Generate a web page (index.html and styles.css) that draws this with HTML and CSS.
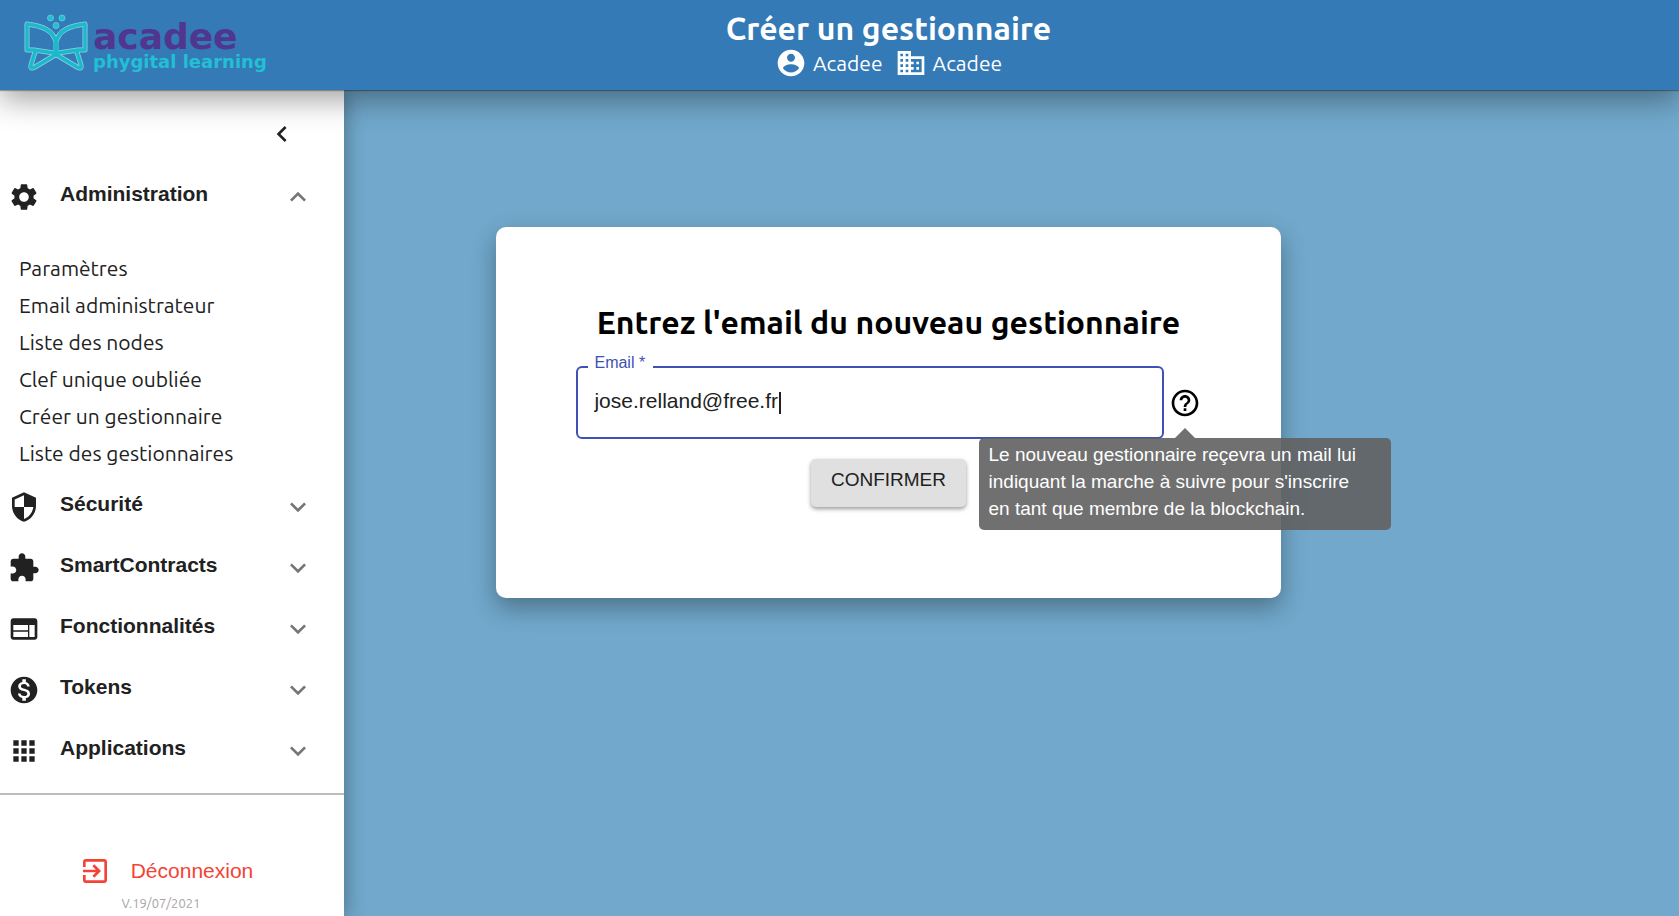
FILE: index.html
```html
<!DOCTYPE html>
<html lang="fr">
<head>
<meta charset="utf-8">
<meta name="viewport" content="width=device-width, initial-scale=1">
<title>Créer un gestionnaire</title>
<link rel="stylesheet" href="styles.css">
</head>
<body>
<header class="topbar">
  <a class="brand" href="#" aria-label="Acadee">
    <svg class="brand-mark" viewBox="22 11 68 62" aria-hidden="true">
      <g fill="none" stroke-linecap="round" stroke-linejoin="round">
        <g stroke="#8fd0df" stroke-width="5">
          <path d="M56 54V43C54 30 42 26 27 24V50H34L54 53M56 54V43C58 30 70 26 85 24V50H78L58 53M35 52L31 65Q30 70 35 67L56 54.500L77 67Q82 70 81 65L77 52"/>
        </g>
        <path stroke="#1cb9cc" stroke-width="3.500" d="M56 54V43C54 30 42 26 27 24V50H34L54 53M56 54V43C58 30 70 26 85 24V50H78L58 53M35 52L31 65Q30 70 35 67L56 54.500L77 67Q82 70 81 65L77 52"/>
        <path stroke="#1cb9cc" stroke-width="5" d="M56 42V54"/>
      </g>
      <g fill="#25bfd2" stroke="#5cc5d7" stroke-width="1"><circle cx="50.500" cy="18" r="3"/><circle cx="62" cy="18" r="3"/><circle cx="56" cy="25.500" r="3"/></g>
    </svg>
    <span class="brand-text"><span class="brand-name">acadee</span><span class="brand-tag">phygital learning</span></span>
  </a>
  <div class="heading">
    <h1 class="page-title">Créer un gestionnaire</h1>
    <div class="identity">
      <svg class="icon" viewBox="0 0 24 24" aria-hidden="true"><path d="M12 2C6.480 2 2 6.480 2 12s4.480 10 10 10 10-4.480 10-10S17.520 2 12 2zm0 3c1.660 0 3 1.340 3 3s-1.340 3-3 3-3-1.340-3-3 1.340-3 3-3zm0 14.200c-2.500 0-4.710-1.280-6-3.220.030-1.990 4-3.080 6-3.080 1.990 0 5.970 1.090 6 3.080-1.290 1.940-3.500 3.220-6 3.220z"/></svg>
      <span class="identity-name">Acadee</span>
      <svg class="icon" viewBox="0 0 24 24" aria-hidden="true"><path d="M12 7V3H2v18h20V7H12zM6 19H4v-2h2v2zm0-4H4v-2h2v2zm0-4H4V9h2v2zm0-4H4V5h2v2zm4 12H8v-2h2v2zm0-4H8v-2h2v2zm0-4H8V9h2v2zm0-4H8V5h2v2zm10 12h-8v-2h2v-2h-2v-2h2v-2h-2V9h8v10zm-2-8h-2v2h2v-2zm0 4h-2v2h2v-2z"/></svg>
      <span class="identity-name">Acadee</span>
    </div>
  </div>
</header>
<div class="layout">
  <nav class="sidebar">
    <button class="collapse" type="button" aria-label="Replier le menu"><svg class="icon" viewBox="0 0 24 24"><path d="M15.410 7.410L14 6l-6 6 6 6 1.410-1.410L10.830 12z"/></svg></button>
    <button class="section section-open" type="button" aria-expanded="true">
      <svg class="icon" viewBox="0 0 24 24"><path d="M19.140 12.940c.040-.3.060-.610.060-.940 0-.320-.020-.640-.070-.940l2.030-1.580c.180-.140.230-.410.120-.610l-1.920-3.320c-.120-.220-.370-.290-.590-.220l-2.390.960c-.5-.380-1.030-.7-1.620-.940l-.360-2.540c-.040-.240-.240-.410-.480-.410h-3.840c-.240 0-.430.170-.470.410l-.360 2.540c-.590.240-1.130.570-1.620.940l-2.390-.960c-.220-.080-.470 0-.590.220L2.740 8.870c-.120.210-.080.470.120.610l2.030 1.580c-.050.3-.090.630-.090.940s.020.640.070.940l-2.030 1.580c-.180.140-.230.410-.120.610l1.920 3.320c.120.220.370.290.590.220l2.390-.960c.5.380 1.030.7 1.620.940l.360 2.540c.050.240.240.410.480.410h3.840c.240 0 .440-.170.470-.410l.360-2.540c.590-.240 1.130-.560 1.620-.940l2.390.960c.220.080.470 0 .590-.220l1.920-3.320c.120-.220.070-.470-.120-.610l-2.010-1.580zM12 15.600c-1.980 0-3.600-1.620-3.600-3.600s1.620-3.600 3.600-3.600 3.600 1.620 3.600 3.600-1.620 3.600-3.600 3.600z"/></svg>
      <span class="section-name">Administration</span>
      <svg class="icon arrow" viewBox="0 0 24 24"><path d="M12 8l-6 6 1.410 1.410L12 10.830l4.590 4.580L18 14z"/></svg>
    </button>
    <ul class="links">
      <li><a href="#">Paramètres</a></li>
      <li><a href="#">Email administrateur</a></li>
      <li><a href="#">Liste des nodes</a></li>
      <li><a href="#">Clef unique oubliée</a></li>
      <li><a href="#">Créer un gestionnaire</a></li>
      <li><a href="#">Liste des gestionnaires</a></li>
    </ul>
    <button class="section" type="button" aria-expanded="false">
      <svg class="icon" viewBox="0 0 24 24"><path d="M12 1L3 5v6c0 5.550 3.840 10.740 9 12 5.160-1.260 9-6.450 9-12V5l-9-4zm0 10.990h7c-.530 4.120-3.280 7.790-7 8.940V12H5V6.300l7-3.110v8.800z"/></svg>
      <span class="section-name">Sécurité</span>
      <svg class="icon arrow" viewBox="0 0 24 24"><path d="M16.590 8.590L12 13.170 7.410 8.590 6 10l6 6 6-6z"/></svg>
    </button>
    <button class="section" type="button" aria-expanded="false">
      <svg class="icon" viewBox="0 0 24 24"><path d="M20.500 11H19V7c0-1.100-.9-2-2-2h-4V3.500C13 2.120 11.880 1 10.500 1S8 2.120 8 3.500V5H4c-1.100 0-1.990.9-1.990 2v3.800H3.500c1.490 0 2.700 1.210 2.700 2.700s-1.210 2.700-2.700 2.700H2V20c0 1.100.9 2 2 2h3.800v-1.500c0-1.490 1.210-2.700 2.700-2.700 1.490 0 2.700 1.210 2.700 2.700V22H17c1.100 0 2-.9 2-2v-4h1.500c1.380 0 2.500-1.120 2.500-2.500S21.880 11 20.500 11z"/></svg>
      <span class="section-name">SmartContracts</span>
      <svg class="icon arrow" viewBox="0 0 24 24"><path d="M16.590 8.590L12 13.170 7.410 8.590 6 10l6 6 6-6z"/></svg>
    </button>
    <button class="section" type="button" aria-expanded="false">
      <svg class="icon" viewBox="0 0 24 24"><path d="M20 4H4c-1.100 0-1.990.9-1.990 2L2 18c0 1.100.9 2 2 2h16c1.100 0 2-.9 2-2V6c0-1.100-.9-2-2-2zm-5 14H4v-4h11v4zm0-5H4V9h11v4zm5 5h-4V9h4v9z"/></svg>
      <span class="section-name">Fonctionnalités</span>
      <svg class="icon arrow" viewBox="0 0 24 24"><path d="M16.590 8.590L12 13.170 7.410 8.590 6 10l6 6 6-6z"/></svg>
    </button>
    <button class="section" type="button" aria-expanded="false">
      <svg class="icon" viewBox="0 0 24 24"><path d="M12 2C6.480 2 2 6.480 2 12s4.480 10 10 10 10-4.480 10-10S17.520 2 12 2zm1.410 16.090V20h-2.670v-1.930c-1.710-.360-3.160-1.460-3.270-3.400h1.960c.1 1.050.820 1.870 2.650 1.870 1.960 0 2.400-.980 2.400-1.590 0-.830-.440-1.610-2.670-2.140-2.480-.6-4.180-1.620-4.180-3.670 0-1.720 1.390-2.840 3.110-3.210V4h2.670v1.950c1.860.450 2.790 1.860 2.850 3.390H14.300c-.050-1.110-.640-1.870-2.220-1.870-1.500 0-2.400.680-2.400 1.640 0 .840.650 1.390 2.670 1.910s4.180 1.390 4.180 3.910c-.010 1.830-1.380 2.830-3.120 3.160z"/></svg>
      <span class="section-name">Tokens</span>
      <svg class="icon arrow" viewBox="0 0 24 24"><path d="M16.590 8.590L12 13.170 7.410 8.590 6 10l6 6 6-6z"/></svg>
    </button>
    <button class="section" type="button" aria-expanded="false">
      <svg class="icon" viewBox="0 0 24 24"><path d="M4 8h4V4H4v4zm6 12h4v-4h-4v4zm-6 0h4v-4H4v4zm0-6h4v-4H4v4zm6 0h4v-4h-4v4zm6-10v4h4V4h-4zm-6 4h4V4h-4v4zm6 6h4v-4h-4v4zm0 6h4v-4h-4v4z"/></svg>
      <span class="section-name">Applications</span>
      <svg class="icon arrow" viewBox="0 0 24 24"><path d="M16.590 8.590L12 13.170 7.410 8.590 6 10l6 6 6-6z"/></svg>
    </button>
    <div class="account">
      <button class="logout" type="button">
        <svg class="icon" viewBox="0 0 24 24"><path d="M10.090 15.590L11.500 17l5-5-5-5-1.410 1.410L12.670 11H3v2h9.670l-2.580 2.590zM19 3H5c-1.110 0-2 .9-2 2v4h2V5h14v14H5v-4H3v4c0 1.100.890 2 2 2h14c1.100 0 2-.9 2-2V5c0-1.100-.9-2-2-2z"/></svg>
        <span>Déconnexion</span>
      </button>
      <span class="version">V.19/07/2021</span>
    </div>
  </nav>
  <main class="content">
    <form class="card">
      <h2 class="card-title">Entrez l'email du nouveau gestionnaire</h2>
      <div class="field-row">
        <div class="field">
          <label class="field-label" for="email">Email *</label>
          <input class="field-input" id="email" type="email" value="jose.relland@free.fr" required>
          <span class="caret"></span>
        </div>
        <div class="help">
          <svg class="icon" viewBox="0 0 24 24" aria-describedby="email-help"><path d="M11 18h2v-2h-2v2zm1-16C6.480 2 2 6.480 2 12s4.480 10 10 10 10-4.480 10-10S17.520 2 12 2zm0 18c-4.410 0-8-3.590-8-8s3.590-8 8-8 8 3.590 8 8-3.590 8-8 8zm0-14c-2.210 0-4 1.790-4 4h2c0-1.100.9-2 2-2s2 .9 2 2c0 2-3 1.750-3 5h2c0-2.250 3-2.500 3-5 0-2.210-1.790-4-4-4z"/></svg>
          <div class="tooltip" id="email-help" role="tooltip">Le nouveau gestionnaire reçevra un mail lui indiquant la marche à suivre pour s'inscrire en tant que membre de la blockchain.</div>
        </div>
      </div>
      <button class="confirm" type="button">CONFIRMER</button>
    </form>
  </main>
</div>
</body>
</html>
```

FILE: styles.css
```css
* { box-sizing: border-box; }

body {
  margin: 0;
  min-height: 100vh;
  display: flex;
  flex-direction: column;
  background: #71a8cb;
  color: #212121;
  font-family: "Liberation Sans", Arial, sans-serif;
  font-size: 21px;
}

button {
  border: 0;
  background: none;
  color: inherit;
  font: inherit;
  cursor: pointer;
}

a { color: inherit; text-decoration: none; }

.icon { width: 32px; height: 32px; flex: none; fill: currentColor; }

.topbar {
  position: relative;
  z-index: 2;
  display: grid;
  grid-template-columns: 344px 1fr 246px;
  height: 90px;
  background: #347ab6;
  color: #fff;
  box-shadow: 0 1px 1px rgba(0, 0, 0, .3), 0 10px 30px rgba(0, 0, 0, .36);
}

.brand { display: flex; align-items: flex-start; padding: 11px 0 0 22px; }
.brand-mark { width: 68px; height: 62px; flex: none; }
.brand-text {
  display: flex;
  flex-direction: column;
  padding: 9px 0 0 3px;
  font-family: "DejaVu Sans", sans-serif;
  font-weight: bold;
  white-space: nowrap;
}
.brand-name { color: #50368f; font-size: 36px; line-height: 34px; }
.brand-tag { color: #23bfd4; font-size: 18px; line-height: 16px; }

.heading {
  display: flex;
  flex-direction: column;
  align-items: center;
  padding-top: 9px;
  font-family: Ubuntu, "Noto Sans", sans-serif;
}
.page-title { margin: 0; font-size: 32px; line-height: 38px; }
.identity { display: flex; align-items: center; line-height: 30px; }
.identity-name { margin: 0 12px 0 6px; }
.identity-name:last-child { margin-right: 0; }

.layout { flex: 1; display: grid; grid-template-columns: 344px 1fr; }

.sidebar {
  position: relative;
  z-index: 1;
  display: flex;
  flex-direction: column;
  background: #fff;
  box-shadow: 0 0 20px rgba(0, 0, 0, .36);
}

.collapse { align-self: flex-end; margin: 28px 46px 0 0; padding: 0; height: 32px; }

.section {
  display: flex;
  align-items: center;
  gap: 20px;
  width: 100%;
  min-height: 61px;
  padding: 0 30px 0 8px;
  text-align: left;
  font-weight: bold;
}
.section-open { margin: 16px 0 23px; }
.section-name { flex: 1; padding-bottom: 5px; }
.arrow { color: #757575; }

.links {
  margin: 0;
  padding: 0 19px 4px;
  list-style: none;
  font-family: Ubuntu, "Noto Sans", sans-serif;
  line-height: 37px;
}

.account {
  display: flex;
  flex-direction: column;
  align-items: center;
  flex: 1;
  margin-top: 12px;
  padding: 60px 22px 0 0;
  border-top: 2px solid #bdbdbd;
}
.logout { display: flex; align-items: center; gap: 20px; margin-left: 10px; padding: 0; color: #f44336; }
.version {
  color: #a9a4a4;
  font-family: Ubuntu, "Noto Sans", sans-serif;
  font-size: 13px;
  line-height: 32px;
}

.content { padding: 137px 246px 0 0; }

.card {
  display: flex;
  flex-direction: column;
  align-items: center;
  width: 72%;
  margin: 0 auto;
  padding: 75px 80px 91px;
  border-radius: 10px;
  background: #fff;
  box-shadow: 0 10px 24px rgba(0, 0, 0, .32);
}
.card-title {
  margin: 0 0 24px;
  color: #000;
  font-family: Ubuntu, "Noto Sans", sans-serif;
  font-size: 32px;
  line-height: 40px;
}

.field-row { display: flex; align-items: center; gap: 5px; width: 100%; }
.field { position: relative; flex: 1; }
.field-input {
  display: block;
  width: 100%;
  height: 73px;
  padding: 0 16px 4px;
  border: 2px solid #3f51b5;
  border-radius: 6px;
  outline: 0;
  background: #fff;
  color: #212121;
  font: inherit;
}
.field-label {
  position: absolute;
  top: -12px;
  left: 12px;
  padding: 0 8px 0 6px;
  background: #fff;
  color: #3f51b5;
  font-size: 16px;
  line-height: 18px;
}
.caret { position: absolute; top: 26px; left: 203px; width: 2px; height: 22px; background: #212121; }

.help { position: relative; display: flex; color: #000; }
.tooltip {
  position: absolute;
  top: 51px;
  left: -190px;
  width: 412px;
  padding: 3px 22px 8px 10px;
  border-radius: 5px;
  background: rgba(97, 97, 97, .9);
  color: #fff;
  font-size: 19px;
  line-height: 27px;
}
.tooltip::before {
  content: "";
  position: absolute;
  bottom: 100%;
  left: 196px;
  border: 10px solid transparent;
  border-top: 0;
  border-bottom-color: rgba(97, 97, 97, .9);
}

.confirm {
  height: 48px;
  margin-top: 20px;
  padding: 0 20px 6px;
  border-radius: 5px;
  background: #e0e0e0;
  box-shadow: 0 2px 4px rgba(0, 0, 0, .4);
  font-size: 19px;
}
```
